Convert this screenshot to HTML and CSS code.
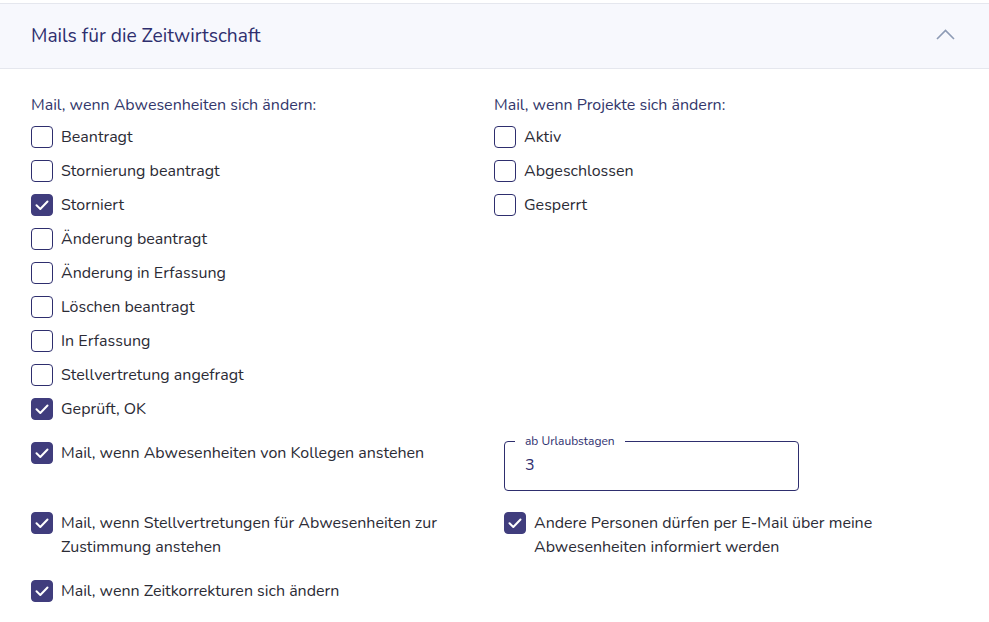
FILE: index.html
```html
<!DOCTYPE html>
<html lang="de">
<head>
  <meta charset="UTF-8">
  <title>Mails für die Zeitwirtschaft</title>
  <link rel="stylesheet" href="styles.css">
</head>
<body>
  <!-- Panel -->
  <div class="panel">
    <div class="panel-header">
      <h2 class="panel-title">Mails für die Zeitwirtschaft</h2>
      <svg class="chevron" width="19" height="11" viewBox="0 0 19 11" fill="none">
        <path d="M1 10L9.5 1.5L18 10" stroke="#8d9bb5" stroke-width="1.6"/>
      </svg>
    </div>

    <div class="panel-body">
      <!-- Status lists -->
      <div class="columns">
        <div class="column">
          <div class="group-label">Mail, wenn Abwesenheiten sich ändern:</div>
          <label class="check"><span class="box"></span><span class="check-text">Beantragt</span></label>
          <label class="check"><span class="box"></span><span class="check-text">Stornierung beantragt</span></label>
          <label class="check"><span class="box checked"></span><span class="check-text">Storniert</span></label>
          <label class="check"><span class="box"></span><span class="check-text">Änderung beantragt</span></label>
          <label class="check"><span class="box"></span><span class="check-text">Änderung in Erfassung</span></label>
          <label class="check"><span class="box"></span><span class="check-text">Löschen beantragt</span></label>
          <label class="check"><span class="box"></span><span class="check-text">In Erfassung</span></label>
          <label class="check"><span class="box"></span><span class="check-text">Stellvertretung angefragt</span></label>
          <label class="check"><span class="box checked"></span><span class="check-text">Geprüft, OK</span></label>
        </div>
        <div class="column">
          <div class="group-label">Mail, wenn Projekte sich ändern:</div>
          <label class="check"><span class="box"></span><span class="check-text">Aktiv</span></label>
          <label class="check"><span class="box"></span><span class="check-text">Abgeschlossen</span></label>
          <label class="check"><span class="box"></span><span class="check-text">Gesperrt</span></label>
        </div>
      </div>

      <!-- Further options -->
      <div class="options">
        <label class="check check-wrap first"><span class="box checked"></span><span class="check-text">Mail, wenn Abwesenheiten von Kollegen anstehen</span></label>
        <fieldset class="field">
          <legend class="field-label">ab Urlaubstagen</legend>
          <input class="field-input" type="text" value="3">
        </fieldset>

        <label class="check check-wrap"><span class="box checked"></span><span class="check-text">Mail, wenn Stellvertretungen für Abwesenheiten zur Zustimmung anstehen</span></label>
        <label class="check check-wrap indent"><span class="box checked"></span><span class="check-text">Andere Personen dürfen per E-Mail über meine Abwesenheiten informiert werden</span></label>

        <label class="check check-wrap"><span class="box checked"></span><span class="check-text">Mail, wenn Zeitkorrekturen sich ändern</span></label>
      </div>
    </div>
  </div>
</body>
</html>
```

FILE: styles.css
```css
/* =====================
   Variables
   ===================== */
:root {
  --navy: #2e2e6e;
  --check-bg: #403d7d;
  --text-color: #2b2b35;
  --label-color: #33376b;
  --header-bg: #f7f8fd;
  --border-color: #e5e7ee;
}

/* =====================
   Global
   ===================== */
body {
  margin: 0;
  padding-top: 3px;
  font-family: "Nunito", "Lato", "Noto Sans", sans-serif;
  font-size: 16px;
  color: var(--text-color);
  background: #fff;
}

/* =====================
   Panel header
   ===================== */
.panel-header {
  display: flex;
  align-items: center;
  justify-content: space-between;
  height: 64px;
  padding: 0 34px 0 31px;
  background: var(--header-bg);
  border-top: 1px solid var(--border-color);
  border-bottom: 1px solid var(--border-color);
}

.panel-title {
  margin: 0;
  font-size: 19.2px;
  font-weight: 400;
  color: var(--navy);
}

.chevron {
  margin-top: -4px;
}

/* =====================
   Panel body
   ===================== */
.panel-body {
  padding: 24px 31px 20px;
}

.columns,
.options {
  display: grid;
  grid-template-columns: 463px 1fr;
}

.group-label {
  line-height: 24px;
  margin-bottom: 3px;
  color: var(--label-color);
}

/* =====================
   Checkboxes
   ===================== */
.check {
  display: flex;
  align-items: center;
  gap: 8px;
  height: 34px;
  cursor: pointer;
}

.box {
  flex: none;
  box-sizing: border-box;
  width: 22px;
  height: 22px;
  border: 1.5px solid var(--navy);
  border-radius: 4px;
  background: #fff;
}

.box.checked {
  border-color: var(--check-bg);
  background: var(--check-bg) url("data:image/svg+xml,%3Csvg xmlns='http://www.w3.org/2000/svg' viewBox='0 0 22 22'%3E%3Cpath d='M5.5 11.3L9.3 15L16.5 7.5' fill='none' stroke='white' stroke-width='2' stroke-linecap='round' stroke-linejoin='round'/%3E%3C/svg%3E") center / 22px 22px no-repeat;
}

.check-text {
  line-height: 24px;
}

.check-wrap {
  align-items: flex-start;
  height: auto;
  padding-right: 20px;
}

.check-wrap .box {
  margin-top: 1px;
}

/* =====================
   Options grid
   ===================== */
.options {
  margin-top: 8px;
  row-gap: 20px;
}

.options .first {
  margin-top: 7px;
}

.options > .check:last-child {
  grid-column: 1;
}

.indent {
  padding-left: 10px;
}

.field {
  margin: 0 0 0 10px;
  width: 295px;
  box-sizing: border-box;
  padding: 0 20px 8px;
  border: 1px solid var(--navy);
  border-radius: 4px;
}

.field-label {
  margin-left: -10px;
  padding: 0 10px;
  font-size: 12px;
  line-height: 14px;
  color: var(--navy);
}

.field-input {
  display: block;
  width: 100%;
  height: 34px;
  padding: 0;
  border: none;
  outline: none;
  font-family: inherit;
  font-size: 16px;
  color: var(--navy);
  background: transparent;
}
```
